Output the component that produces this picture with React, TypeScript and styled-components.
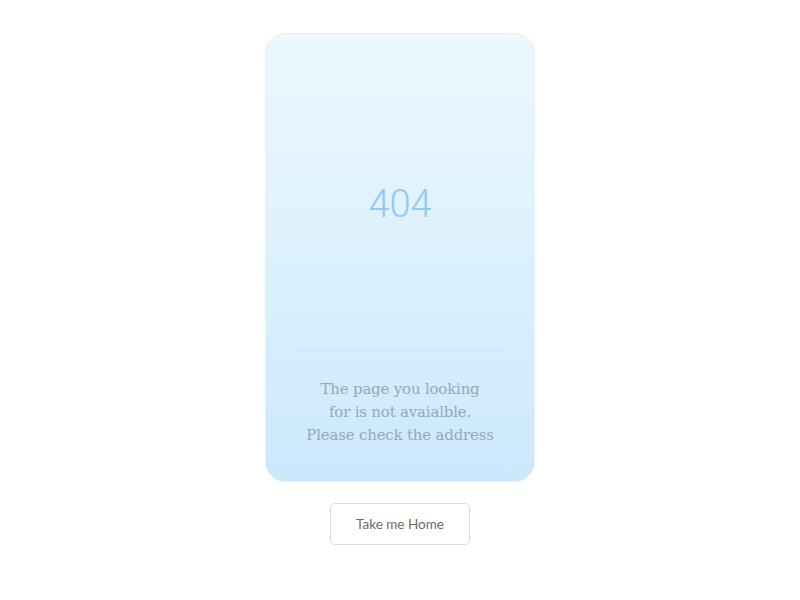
import React from 'react'
import styled, { createGlobalStyle } from 'styled-components'

const GlobalStyle = createGlobalStyle`
  body {
    margin: 0;
    background: #fff;
    font-family: 'Open Sans', sans-serif;
  }
`

const Page = styled.div`
  display: flex;
  flex-direction: column;
  align-items: center;
  padding-top: 33px;
`

const Card = styled.div`
  box-sizing: border-box;
  width: 270px;
  height: 449px;
  border: 1px solid #e6f0f6;
  border-radius: 20px;
  background: linear-gradient(to bottom, #ecf9fe 0%, #cce8fd 100%);
  display: flex;
  flex-direction: column;
  align-items: center;
  padding: 0 29px;
`

const Code = styled.div`
  height: 316px;
  display: flex;
  align-items: center;
  justify-content: center;
  padding-top: 24px;
  box-sizing: border-box;
  font-family: Roboto, 'Open Sans', sans-serif;
  font-weight: 300;
  font-size: 38px;
  color: #92c9f8;
`

const Divider = styled.hr`
  width: 100%;
  margin: 0;
  border: none;
  border-top: 1px solid #c9e1ef;
`

const Message = styled.p`
  margin: 27px 0 0;
  text-align: center;
  font-family: 'DejaVu Serif', serif;
  font-size: 15px;
  line-height: 23px;
  letter-spacing: -0.2px;
  color: #97a8b5;
`

const HomeButton = styled.button`
  margin-top: 21px;
  width: 140px;
  height: 42px;
  background: #fff;
  border: 1px solid #dcdcdc;
  border-radius: 5px;
  font-family: Lato, 'Open Sans', sans-serif;
  font-size: 13.5px;
  color: #6b6b6b;
  cursor: pointer;
`

export default function App() {
  return (
    <Page>
      <GlobalStyle />
      <Card>
        <Code>404</Code>
        <Divider />
        <Message>
          The page you looking
          <br />
          for is not avaialble.
          <br />
          Please check the address
        </Message>
      </Card>
      <HomeButton>Take me Home</HomeButton>
    </Page>
  )
}
